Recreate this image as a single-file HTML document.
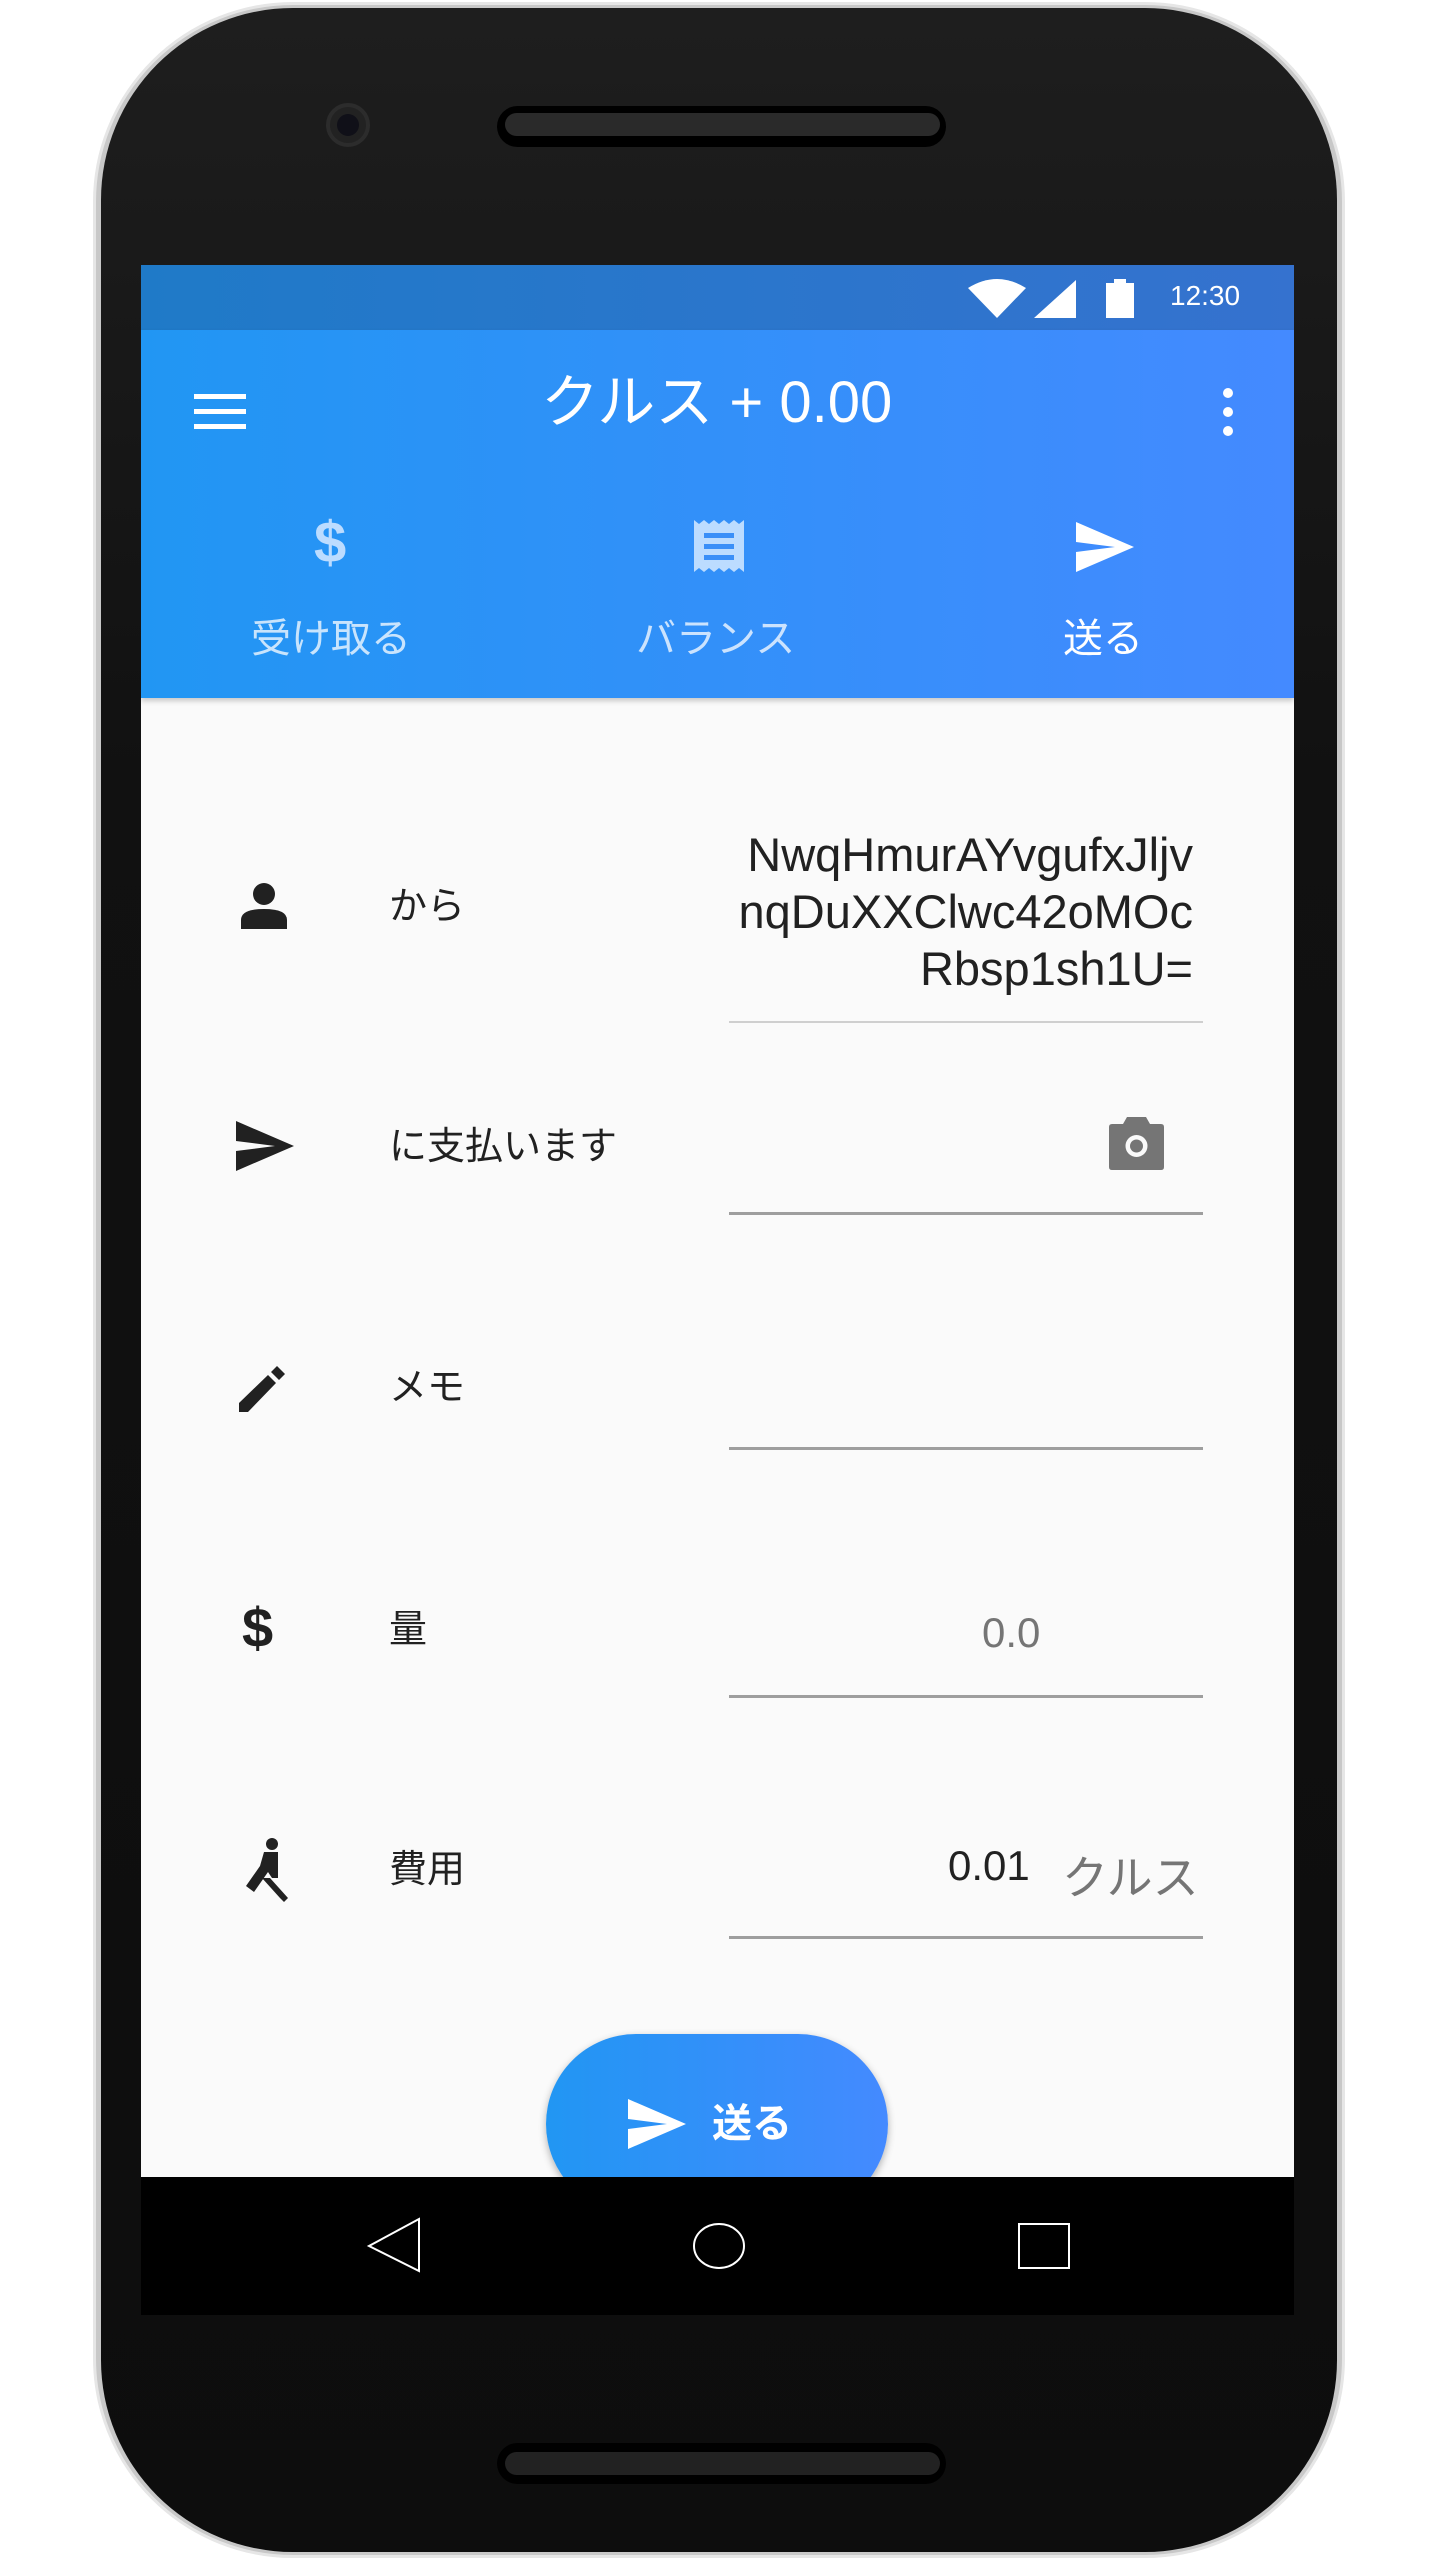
<!DOCTYPE html>
<html><head><meta charset="utf-8"><style>
*{margin:0;padding:0;box-sizing:border-box}
body{width:1440px;height:2560px;background:#fff;position:relative;overflow:hidden;font-family:"Liberation Sans","Noto Sans CJK JP",sans-serif}
.a{position:absolute}
.t{position:absolute;white-space:nowrap;line-height:1}
</style></head><body>
<div class="a" style="left:93px;top:2px;width:1252px;height:2556px;border-radius:200px;background:#c8c8c8;border:3px solid #e6e6e6"></div>
<div class="a" style="left:101px;top:8px;width:1236px;height:2544px;border-radius:192px;background:linear-gradient(180deg,#1e1e1e,#111 30%,#0d0d0d)"></div>
<div class="a" style="left:497px;top:106px;width:449px;height:41px;border-radius:21px;background:#000"></div>
<div class="a" style="left:505px;top:113px;width:435px;height:23px;border-radius:12px;background:#2a2a2a"></div>
<div class="a" style="left:326px;top:103px;width:44px;height:44px;border-radius:50%;background:#222;border:4px solid #2c2c2c"></div>
<div class="a" style="left:337px;top:114px;width:22px;height:22px;border-radius:50%;background:#101018"></div>
<div class="a" style="left:497px;top:2443px;width:449px;height:41px;border-radius:21px;background:#000"></div>
<div class="a" style="left:505px;top:2452px;width:435px;height:23px;border-radius:12px;background:#222"></div>

<!-- screen -->
<div class="a" style="left:141px;top:265px;width:1153px;height:2050px;background:#fafafa;overflow:hidden">
 <div class="a" style="left:0;top:0;width:1153px;height:65px;background:linear-gradient(90deg,#1f7ac8,#3572cf)"></div>
 <div class="a" style="left:0;top:65px;width:1153px;height:368px;background:linear-gradient(90deg,#2196f3,#448aff);box-shadow:0 3px 5px rgba(0,0,0,.2)"></div>
 <div class="a" style="left:0;top:1912px;width:1153px;height:138px;background:#000"></div>
</div>
<!-- status icons -->
<svg class="a" style="left:966px;top:278px" width="62" height="42" viewBox="0 0 62 42"><path d="M2 10 Q31 -8 60 10 L31 40 Z" fill="#fff"/></svg>
<svg class="a" style="left:1032px;top:278px" width="46" height="42"><path d="M44 2 V40 H2 Z" fill="#fff"/></svg>
<div class="a" style="left:1106px;top:283px;width:28px;height:35px;background:#fff"></div>
<div class="a" style="left:1114px;top:279px;width:12px;height:5px;background:#fff"></div>
<div class="t" style="left:1170px;top:282px;font-size:28px;color:#fff">12:30</div>
<!-- app bar -->
<div class="a" style="left:194px;top:394px;width:52px;height:5px;background:#fff"></div>
<div class="a" style="left:194px;top:409px;width:52px;height:5px;background:#fff"></div>
<div class="a" style="left:194px;top:424px;width:52px;height:5px;background:#fff"></div>
<div class="t" style="left:541px;top:374px;font-size:58px;color:#fff">クルス + 0.00</div>
<div class="a" style="left:1223px;top:388px;width:10px;height:10px;border-radius:50%;background:#fff"></div>
<div class="a" style="left:1223px;top:407px;width:10px;height:10px;border-radius:50%;background:#fff"></div>
<div class="a" style="left:1223px;top:426px;width:10px;height:10px;border-radius:50%;background:#fff"></div>
<!-- tabs -->
<div class="t" style="left:314px;top:514px;font-size:58px;font-weight:bold;color:#bcdcff">$</div>
<svg class="a" style="left:692px;top:518px" width="54" height="56" viewBox="0 0 54 56"><path d="M2 2 L7 6 L12 2 L17 6 L22 2 L27 6 L32 2 L37 6 L42 2 L47 6 L52 2 V54 L47 50 L42 54 L37 50 L32 54 L27 50 L22 54 L17 50 L12 54 L7 50 L2 54 Z" fill="#bcdcff"/><rect x="12" y="15" width="30" height="5" fill="#3a8ff8"/><rect x="12" y="26" width="30" height="5" fill="#3a8ff8"/><rect x="12" y="37" width="30" height="5" fill="#3a8ff8"/></svg>
<svg class="a" style="left:1075px;top:521px" width="60" height="52"><path d="M1 1 L59 26 L1 51 L1 31 L40 26 L1 21 Z" fill="#fff"/></svg>
<div class="t" style="left:251px;top:619px;font-size:40px;color:rgba(255,255,255,.75)">受け取る</div>
<div class="t" style="left:636px;top:619px;font-size:40px;color:rgba(255,255,255,.75)">バランス</div>
<div class="t" style="left:1063px;top:619px;font-size:40px;color:#fff">送る</div>

<!-- rows -->
<svg class="a" style="left:240px;top:882px" width="48" height="48" viewBox="0 0 48 48"><circle cx="24" cy="12" r="11" fill="#212121"/><path d="M1 47 V38 Q1 27 24 27 Q47 27 47 38 V47 Z" fill="#212121"/></svg>
<div class="t" style="left:389px;top:888px;font-size:38px;color:#212121">から</div>
<div class="t" style="right:247px;top:826px;font-size:47px;color:#212121;text-align:right;line-height:57px">NwqHmurAYvgufxJljv<br>nqDuXXClwc42oMOc<br>Rbsp1sh1U=</div>
<div class="a" style="left:729px;top:1021px;width:474px;height:2px;background:#cfcfcf"></div>

<svg class="a" style="left:235px;top:1120px" width="60" height="52"><path d="M1 1 L59 26 L1 51 L1 31 L40 26 L1 21 Z" fill="#212121"/></svg>
<div class="t" style="left:389px;top:1128px;font-size:38px;color:#212121">に支払います</div>
<svg class="a" style="left:1108px;top:1116px" width="57" height="55" viewBox="0 0 57 55"><path d="M15 8 L19 1 H38 L42 8 H53 Q56 8 56 11 V51 Q56 54 53 54 H4 Q1 54 1 51 V11 Q1 8 4 8 Z" fill="#757575"/><circle cx="28.5" cy="30" r="11" fill="#fafafa"/><circle cx="28.5" cy="30" r="6.5" fill="#757575"/></svg>
<div class="a" style="left:729px;top:1212px;width:474px;height:3px;background:#9e9e9e"></div>

<svg class="a" style="left:238px;top:1361px" width="54" height="52" viewBox="0 0 54 52"><path d="M1 42 L1 51 L10 51 L38 22 L30 14 Z M33 11 L41 19 L47 13 L39 5 Z" fill="#212121"/></svg>
<div class="t" style="left:389px;top:1369px;font-size:38px;color:#212121">メモ</div>
<div class="a" style="left:729px;top:1447px;width:474px;height:3px;background:#9e9e9e"></div>

<div class="t" style="left:242px;top:1600px;font-size:56px;font-weight:bold;color:#212121">$</div>
<div class="t" style="left:389px;top:1611px;font-size:38px;color:#212121">量</div>
<div class="t" style="left:982px;top:1612px;font-size:42px;color:#757575">0.0</div>
<div class="a" style="left:729px;top:1695px;width:474px;height:3px;background:#9e9e9e"></div>

<svg class="a" style="left:240px;top:1838px" width="52" height="66" viewBox="0 0 52 66"><circle cx="32" cy="6" r="6" fill="#212121"/><path d="M24 14 H38 V40 L32 40 L28 34 L14 54 L6 48 L20 28 Z" fill="#212121"/><path d="M22 40 L40 60 L44 64 L48 60 L30 40 Z" fill="#212121"/></svg>
<div class="t" style="left:389px;top:1851px;font-size:38px;color:#212121">費用</div>
<div class="t" style="left:948px;top:1845px;font-size:42px;color:#212121">0.01</div>
<div class="t" style="left:1062px;top:1855px;font-size:46px;color:#757575">クルス</div>
<div class="a" style="left:729px;top:1936px;width:474px;height:3px;background:#9e9e9e"></div>

<!-- button -->
<div class="a" style="left:141px;top:1990px;width:1153px;height:187px;overflow:hidden">
 <div class="a" style="left:405px;top:44px;width:342px;height:180px;border-radius:90px;background:linear-gradient(90deg,#2196f3,#448aff);box-shadow:0 3px 8px rgba(0,0,0,.3)"></div>
</div>
<svg class="a" style="left:627px;top:2098px" width="60" height="52"><path d="M1 1 L59 26 L1 51 L1 31 L40 26 L1 21 Z" fill="#fff"/></svg>
<div class="t" style="left:712px;top:2104px;font-size:40px;font-weight:bold;color:#fff">送る</div>

<!-- nav -->
<svg class="a" style="left:358px;top:2210px" width="720" height="70"><path d="M61 9 L11 36 L61 61 Z" fill="none" stroke="#fff" stroke-width="2"/><ellipse cx="361" cy="36" rx="25" ry="22" fill="none" stroke="#fff" stroke-width="2"/><rect x="661" y="14" width="50" height="44" fill="none" stroke="#fff" stroke-width="2"/></svg>
</body></html>
